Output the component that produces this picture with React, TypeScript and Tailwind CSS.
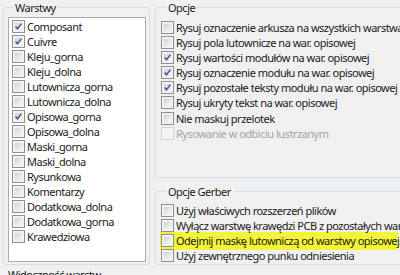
import React from "react";
import clsx from "clsx";

type Item = { label: string; checked?: boolean; disabled?: boolean };

const layers: Item[] = [
  { label: "Composant", checked: true },
  { label: "Cuivre", checked: true },
  { label: "Kleju_gorna" },
  { label: "Kleju_dolna" },
  { label: "Lutownicza_gorna" },
  { label: "Lutownicza_dolna" },
  { label: "Opisowa_gorna", checked: true },
  { label: "Opisowa_dolna" },
  { label: "Maski_gorna" },
  { label: "Maski_dolna" },
  { label: "Rysunkowa" },
  { label: "Komentarzy" },
  { label: "Dodatkowa_dolna" },
  { label: "Dodatkowa_gorna" },
  { label: "Krawedziowa" },
];

const options: Item[] = [
  { label: "Rysuj oznaczenie arkusza na wszystkich warstwach" },
  { label: "Rysuj pola lutownicze na war. opisowej" },
  { label: "Rysuj wartości modułów na war. opisowej", checked: true },
  { label: "Rysuj oznaczenie modułu na war. opisowej", checked: true },
  { label: "Rysuj pozostałe teksty modułu na war. opisowej", checked: true },
  { label: "Rysuj ukryty tekst na war. opisowej" },
];

function CheckBox({ checked, disabled }: { checked?: boolean; disabled?: boolean }) {
  return (
    <span
      className={clsx(
        "relative block w-[13px] h-[13px] shrink-0 border",
        disabled ? "border-[#d4d4d4] bg-[#f4f4f4]" : "border-[#8e8f8f] bg-[#f4f4f4]"
      )}
    >
      <span
        className={clsx(
          "absolute inset-[1px] border",
          disabled
            ? "border-[#f7f7f7] bg-[#f3f3f3]"
            : "border-[#eeeeee] bg-gradient-to-br from-[#d0d2d6] to-[#f7f7f7]"
        )}
      />
      {checked && (
        <svg className="absolute left-0 top-0" width="11" height="11" viewBox="0 0 11 11">
          <path d="M2.6 5.6 L4.5 7.8 L8.4 2.6" fill="none" stroke="#3f5a92" strokeWidth="1.5" />
        </svg>
      )}
    </span>
  );
}

function Row({ item, className }: { item: Item; className?: string }) {
  return (
    <div className={clsx("flex items-center gap-[2px] h-[15px] whitespace-nowrap", className)}>
      <CheckBox checked={item.checked} disabled={item.disabled} />
      <span className={item.disabled ? "text-[#a3a3a3]" : "text-[#1b1b1b]"}>{item.label}</span>
    </div>
  );
}

function Group({
  title,
  className,
  children,
}: {
  title: string;
  className?: string;
  children: React.ReactNode;
}) {
  return (
    <fieldset className={clsx("border border-[#d5dfe5] rounded-[3px] min-w-0", className)}>
      <legend className="ml-[5px] px-[2px] leading-[15px] text-[#1b1b1b]">{title}</legend>
      {children}
    </fieldset>
  );
}

export default function App() {
  return (
    <div className="w-[400px] h-[275px] overflow-hidden bg-[#f0f0f0] font-['Noto_Sans',sans-serif] text-[11px] tracking-[-0.5px] leading-[15px]">
      <div className="flex h-[265px]">
        <Group title="Warstwy" className="ml-[3px] w-[147px] shrink-0 h-[265px] pl-[4px] pr-[3px]">
          <div className="mt-[2px] h-[245px] border border-[#abadb3] bg-white pt-[1px] pl-[3px]">
            {layers.map((l) => (
              <Row key={l.label} item={l} />
            ))}
          </div>
        </Group>
        <div className="ml-[5px] w-[260px] shrink-0 flex flex-col">
          <Group title="Opcje" className="h-[178px] pl-[5px] pt-[5px]">
            {options.map((o) => (
              <Row key={o.label} item={o} />
            ))}
            <Row item={{ label: "Nie maskuj przelotek" }} className="mt-[1px]" />
            <Row item={{ label: "Rysowanie w odbiciu lustrzanym", disabled: true }} />
          </Group>
          <Group title="Opcje Gerber" className="mt-[6px] h-[81px] pl-[5px] pt-[4px]">
            <Row item={{ label: "Użyj właściwych rozszerzeń plików" }} />
            <Row item={{ label: "Wyłącz warstwę krawędzi PCB z pozostałych warstw" }} />
            <div className="-ml-[1px] w-[238px] bg-[#f3f33a] py-[1.5px] -my-[1.5px] pl-[1px]">
              <Row item={{ label: "Odejmij maskę lutowniczą od warstwy opisowej" }} />
            </div>
            <Row item={{ label: "Użyj zewnętrznego punku odniesienia" }} />
          </Group>
        </div>
      </div>
      <div className="pl-[8px] pt-[2px] text-[#1b1b1b]">Widoczność warstw</div>
    </div>
  );
}
